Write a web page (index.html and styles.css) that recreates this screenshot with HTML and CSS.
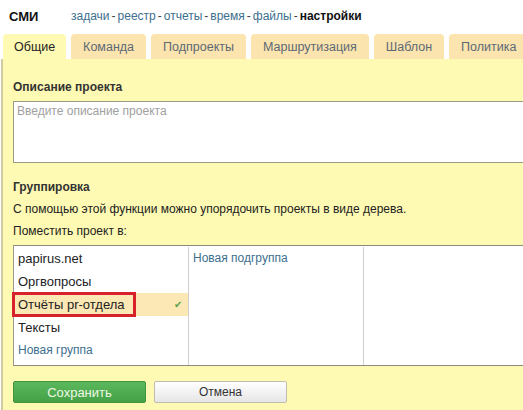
FILE: index.html
```html
<!DOCTYPE html>
<html lang="ru">
<head>
<meta charset="utf-8">
<link rel="stylesheet" href="styles.css">
</head>
<body>
<div class="page">
  <div class="header">
    <span class="title">СМИ</span>
    <nav class="nav">
      <a class="link">задачи</a><span class="sep">-</span><a class="link">реестр</a><span class="sep">-</span><a class="link">отчеты</a><span class="sep">-</span><a class="link">время</a><span class="sep">-</span><a class="link">файлы</a><span class="sep">-</span><span class="current">настройки</span>
    </nav>
  </div>
  <div class="tabs">
    <div class="tab active">Общие</div>
    <div class="tab">Команда</div>
    <div class="tab">Подпроекты</div>
    <div class="tab">Маршрутизация</div>
    <div class="tab">Шаблон</div>
    <div class="tab">Политика</div>
  </div>
  <div class="panel">
    <div class="label">Описание проекта</div>
    <div class="textarea">Введите описание проекта</div>
    <div class="label group">Группировка</div>
    <div class="text">С помощью этой функции можно упорядочить проекты в виде дерева.</div>
    <div class="text">Поместить проект в:</div>
    <div class="tree">
      <div class="col">
        <div class="row">papirus.net</div>
        <div class="row">Оргвопросы</div>
        <div class="row selected"><span class="marked">Отчёты pr-отдела</span><span class="check">✔</span></div>
        <div class="row">Тексты</div>
        <div class="row new">Новая группа</div>
      </div>
      <div class="col">
        <div class="row new">Новая подгруппа</div>
      </div>
      <div class="col last"></div>
    </div>
    <div class="buttons">
      <button class="btn save">Сохранить</button>
      <button class="btn cancel">Отмена</button>
    </div>
  </div>
</div>
</body>
</html>
```
FILE: styles.css
```css
html, body {
  margin: 0;
  padding: 0;
  background: #ffffff;
  overflow: hidden;
}
body {
  font-family: "Liberation Sans", Arial, sans-serif;
  font-size: 12px;
  color: #222;
}
.page {
  width: 560px;
  height: 410px;
  display: flex;
  flex-direction: column;
}
.header {
  height: 34px;
  display: flex;
  align-items: center;
  padding-left: 9px;
  box-sizing: border-box;
  padding-bottom: 2px;
}
.title {
  font-weight: bold;
  font-size: 13px;
  color: #111;
  width: 62px;
}
.nav {
  font-size: 12px;
}
.link {
  color: #3d6f8e;
}
.sep {
  color: #444;
  margin: 0 2px;
}
.current {
  font-weight: bold;
  color: #111;
}
.tabs {
  display: flex;
  gap: 5px;
  padding-left: 3px;
  height: 25px;
}
.tab {
  background: #fce4ae;
  color: #5b6975;
  border-radius: 4px 4px 0 0;
  padding: 0 12px;
  display: flex;
  align-items: center;
  font-size: 12.5px;
}
.tab.active {
  background: #fffab3;
  color: #222;
  padding: 0 11px;
}
.panel {
  flex: 1;
  background: #fffab3;
  border-left: 2px solid #cfcaa0;
  margin-left: 1px;
  padding: 20px 0 0 10px;
}
.label {
  font-weight: bold;
  color: #333;
  height: 16px;
  line-height: 16px;
}
.textarea {
  margin-top: 6px;
  height: 62px;
  background: #fff;
  border: 1px solid #9a9a8a;
  border-right: none;
  color: #a0a0a0;
  padding: 2px 3px;
  box-sizing: border-box;
  font-size: 12px;
}
.group {
  margin-top: 16px;
}
.text {
  margin-top: 6px;
  height: 16px;
  line-height: 16px;
  color: #222;
}
.tree {
  margin-top: 6px;
  height: 121px;
  padding-top: 1px;
  background: #fff;
  border-top: 1px solid #8a8a80;
  border-bottom: 1px solid #8a8a80;
  border-left: 1px solid #9a9a90;
  display: flex;
  box-sizing: border-box;
}
.col {
  width: 174px;
  border-right: 1px solid #cfcfcf;
  font-size: 13px;
}
.col.last {
  border-right: none;
  flex: 1;
}
.row {
  height: 23px;
  line-height: 23px;
  padding-left: 4px;
}
.row.new {
  color: #3d6f8e;
  font-size: 12px;
}
.row.selected {
  background: #fbe8b4;
  display: flex;
  justify-content: space-between;
  padding-right: 6px;
}
.marked {
  position: relative;
}
.marked::before {
  content: "";
  position: absolute;
  left: -6px;
  right: -11px;
  top: -1px;
  bottom: -1px;
  border: 3px solid #d7222b;
}
.check {
  color: #5aa44a;
  font-size: 10px;
}
.buttons {
  display: flex;
  gap: 8px;
  margin-top: 15px;
}
.btn {
  height: 22px;
  width: 133px;
  font-family: "Liberation Sans", Arial, sans-serif;
  border-radius: 2px;
  padding: 0;
  cursor: pointer;
}
.save {
  background: linear-gradient(#5cb85c, #45a145);
  border: 1px solid #3e953e;
  color: #eef8e6;
  font-size: 13px;
}
.cancel {
  background: linear-gradient(#ffffff, #e6e6e6);
  border: 1px solid #bdbdb0;
  color: #333;
  font-size: 12px;
}
```
